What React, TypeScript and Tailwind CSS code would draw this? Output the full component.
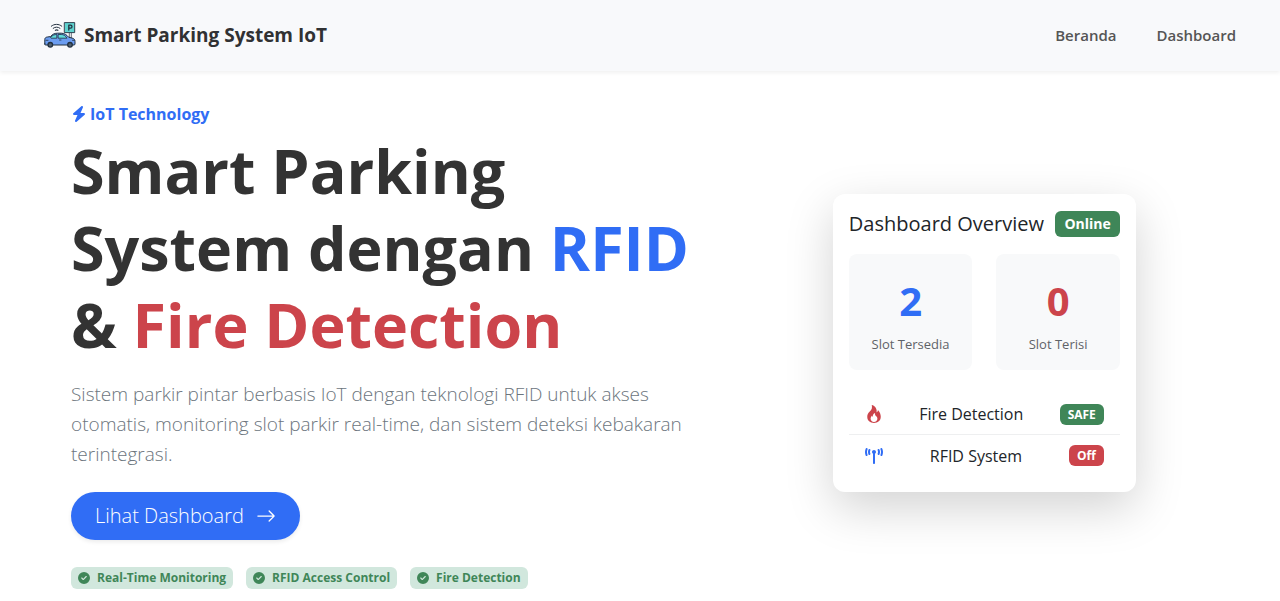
import type { ReactNode } from "react";
import { BsArrowRight, BsFire } from "react-icons/bs";
import { FaBolt, FaCircleCheck, FaTowerBroadcast } from "react-icons/fa6";

function Logo() {
  return (
    <svg viewBox="0 0 32 32" className="size-8 shrink-0" aria-hidden="true">
      <g stroke="#22303f" strokeLinecap="round" strokeLinejoin="round">
        <path d="M25.3 13v8M27.3 13v8" strokeWidth="0.7" />
        <rect x="20.700" y="2.600" width="10" height="10" fill="#5fd3cf" strokeWidth="0.900" />
        <path d="M24.800 10V5.200h1.700a1.500 1.500 0 0 1 0 3h-1.700" fill="none" strokeWidth="1.300" />
        <path d="M7.300 6.200c3-2.500 7.500-2.500 10.500 0M9.200 8.300c2.100-1.600 4.700-1.600 6.800 0" fill="none" strokeWidth="1" />
        <path d="M11.400 10.300c.8-.5 1.700-.5 2.500 0" fill="none" strokeWidth="1.200" />
        <path d="M.8 24v-4.500c0-1.500 1-2.300 2.600-2.500l3-.4c2-2.200 4-3.400 7-3.400h3.800c3 0 5.400 1.500 7.400 4l3.600.9c1.900.5 2.800 1.600 2.800 3.300V24c0 .6-.4 1-1 1H1.800c-.6 0-1-.4-1-1z" fill="#6c9df0" strokeWidth="1" />
        <path d="M6.800 17c1.800-1.700 3.600-2.500 6-2.500v3.700H7.500zM14.500 14.500h2.700c2.400 0 4.300 1.200 5.700 3.700h-8.400z" fill="#62dbdc" strokeWidth="0.800" />
        <path d="M2 20.300h2M28.500 20.300h2M15.500 20h1.500" fill="none" strokeWidth="0.800" />
        <circle cx="6.300" cy="24.800" r="2.300" fill="#52616f" strokeWidth="1.300" />
        <circle cx="26" cy="24.800" r="2.300" fill="#52616f" strokeWidth="1.300" />
      </g>
    </svg>
  );
}

function Feature({ children }: { children: ReactNode }) {
  return (
    <li className="flex h-[22px] items-center gap-[7px] rounded-md bg-[#d1e7dd] px-[7px] text-xs font-bold text-[#3f8658]">
      <FaCircleCheck className="size-3" />
      {children}
    </li>
  );
}

function Stat({ value, label, color }: { value: number; label: string; color: string }) {
  return (
    <div className="flex-1 rounded-lg bg-[#f8f9fa] pt-6 pb-[14px] text-center">
      <p className={`text-[40px] leading-[46px] font-bold ${color}`}>{value}</p>
      <p className="mt-2 text-[13px] leading-6 text-[#5f6368]">{label}</p>
    </div>
  );
}

function Status({ icon, label, badge, color }: { icon: ReactNode; label: string; badge: string; color: string }) {
  return (
    <li className="flex h-[41px] items-center justify-between px-4">
      {icon}
      <span className="text-base text-[#212529]">{label}</span>
      <span className={`rounded-md px-2 py-1 text-xs leading-[13px] font-bold text-white ${color}`}>{badge}</span>
    </li>
  );
}

export default function App() {
  return (
    <div className="min-h-screen bg-white font-['Open_Sans','Noto_Sans',sans-serif] text-[#212529]">
      <header className="flex h-[71px] items-center justify-between bg-[#f8f9fb] px-11 shadow-[0_2px_4px_rgba(0,0,0,0.06)]">
        <a href="#" className="flex items-center gap-2 text-[19px] font-bold text-[#303133]">
          <Logo />
          Smart Parking System IoT
        </a>
        <nav className="flex gap-10 text-[15px] font-semibold text-[#555]">
          <a href="#beranda">Beranda</a>
          <a href="#dashboard">Dashboard</a>
        </nav>
      </header>

      <main className="mx-auto grid max-w-[1138px] grid-cols-[7fr_5fr] items-center">
        <section className="pt-[31px] pb-8">
          <p className="flex items-center gap-[3px] text-base leading-6 font-bold text-[#306df5]">
            <FaBolt className="h-4 w-auto" />
            IoT Technology
          </p>
          <h1 className="mt-[6px] text-[61px] leading-[77px] font-bold text-[#333]">
            Smart Parking
            <br />
            System dengan <span className="text-[#306df5]">RFID</span>
            <br />& <span className="text-[#cc444b]">Fire Detection</span>
          </h1>
          <p className="mt-4 max-w-[620px] text-[19px] leading-[30px] font-light text-[#6c757d]">
            Sistem parkir pintar berbasis IoT dengan teknologi RFID untuk akses otomatis, monitoring slot parkir
            real-time, dan sistem deteksi kebakaran terintegrasi.
          </p>
          <a
            href="#dashboard"
            className="mt-[23px] inline-flex h-12 items-center gap-3 rounded-full bg-[#306df5] px-6 text-xl font-light text-white shadow-[0_2px_4px_rgba(0,0,0,0.08)]"
          >
            Lihat Dashboard
            <BsArrowRight className="size-5" />
          </a>
          <ul className="mt-[27px] flex gap-[13px]">
            <Feature>Real-Time Monitoring</Feature>
            <Feature>RFID Access Control</Feature>
            <Feature>Fire Detection</Feature>
          </ul>
        </section>

        <section className="mb-[6px] ml-[98px] w-[303px] rounded-xl bg-white p-4 shadow-[0_16px_48px_rgba(0,0,0,0.175)]">
          <div className="flex items-center justify-between">
            <h2 className="text-xl">Dashboard Overview</h2>
            <span className="rounded-md bg-[#3f8658] px-[9px] text-sm leading-[26px] font-bold text-white">Online</span>
          </div>
          <div className="mt-4 flex gap-6">
            <Stat value={2} label="Slot Tersedia" color="text-[#306df5]" />
            <Stat value={0} label="Slot Terisi" color="text-[#cc444b]" />
          </div>
          <ul className="mt-6 divide-y divide-[#eeeff0]">
            <Status icon={<BsFire className="size-[18px] text-[#cc444b]" />} label="Fire Detection" badge="SAFE" color="bg-[#3f8658]" />
            <Status icon={<FaTowerBroadcast className="h-[18px] w-auto text-[#306df5]" />} label="RFID System" badge="Off" color="bg-[#cc444b]" />
          </ul>
        </section>
      </main>
    </div>
  );
}
